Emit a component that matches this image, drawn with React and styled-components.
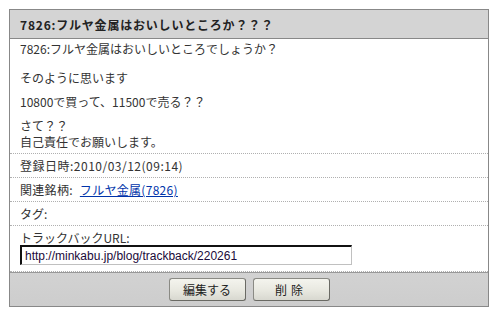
import React from "react";
import styled, { createGlobalStyle } from "styled-components";

const GlobalStyle = createGlobalStyle`
    html, body {
        margin: 0;
        padding: 0;
        background: #ffffff;
    }
    body {
        font-family: "Noto Sans CJK JP", "DejaVu Sans", sans-serif;
        font-size: 12px;
        color: #333333;
    }
`;

const Page = styled.div`
    padding: 9px 0 0 9px;
    width: 495px;
    box-sizing: border-box;
`;

const Box = styled.div`
    width: 480px;
    box-sizing: border-box;
    border: 1px solid #888888;
    background: #ffffff;
`;

const Header = styled.div`
    height: 29px;
    box-sizing: border-box;
    display: flex;
    align-items: center;
    padding: 0 10px;
    background: #d4d4d4;
    border-bottom: 1px solid #888888;
    font-weight: bold;
    font-size: 12px;
    letter-spacing: 0.8px;
    color: #222222;
`;

const Row = styled.div`
    padding: ${(p) => p.$pad || "4px 10px"};
    min-height: ${(p) => p.$h || "auto"};
    box-sizing: border-box;
    border-bottom: 1px dotted #b0b0b0;
    line-height: 15px;
    letter-spacing: ${(p) => p.$spread || "0"};
    &:last-child {
        border-bottom: none;
    }
`;

const Para = styled.p`
    margin: 0 0 ${(p) => p.$gap || "9px"} 0;
    line-height: ${(p) => p.$lh || "15px"};
    &:last-child {
        margin-bottom: 0;
    }
`;

const Label = styled.span`
    color: #333333;
`;

const StockLink = styled.a`
    color: #0033aa;
    text-decoration: underline;
    margin-left: 7px;
`;

const UrlInput = styled.input`
    display: block;
    width: 332px;
    height: 20px;
    box-sizing: border-box;
    padding: 1px 3px;
    border-style: solid;
    border-width: 2px 1px 1px 2px;
    border-color: #111111 #c0c0c0 #c0c0c0 #111111;
    font-family: "Liberation Sans", Arial, sans-serif;
    font-size: 12px;
    letter-spacing: 0;
    color: #1a0a3a;
    background: #ffffff;
    outline: none;
`;

const Footer = styled.div`
    height: 34px;
    display: flex;
    align-items: center;
    justify-content: center;
    gap: 7px;
    background: linear-gradient(#d2d2d2, #cdcdcd);
    border-top: 1px solid #999999;
    box-sizing: border-box;
`;

const Button = styled.button`
    width: 77px;
    height: 23px;
    border: 1px solid #8a8a84;
    border-right-color: #6a6a64;
    border-bottom-color: #6a6a64;
    border-radius: 3px;
    background: linear-gradient(#f4f4ee, #e8e8e0 55%, #d8d8d0);
    font-family: "Noto Sans CJK JP", sans-serif;
    font-size: 12px;
    color: #222222;
    letter-spacing: ${(p) => p.$spread || "0"};
    padding: 0;
    cursor: pointer;
`;

export default function App() {
    return (
        <Page>
            <GlobalStyle />
            <Box>
                <Header>7826:フルヤ金属はおいしいところか？？？</Header>
                <Row $pad="2px 10px 3px 10px" $h="115px">
                    <Para $gap="14px">7826:フルヤ金属はおいしいところでしょうか？</Para>
                    <Para $gap="9px">そのように思います</Para>
                    <Para $gap="9px">10800で買って、11500で売る？？</Para>
                    <Para $lh="16px">
                        さて？？
                        <br />
                        自己責任でお願いします。
                    </Para>
                </Row>
                <Row $h="24px" $spread="0.5px">
                    <Label>登録日時:2010/03/12(09:14)</Label>
                </Row>
                <Row $h="24px" $spread="0.3px">
                    <Label>関連銘柄:</Label>
                    <StockLink href="#">フルヤ金属(7826)</StockLink>
                </Row>
                <Row $h="24px">
                    <Label>タグ:</Label>
                </Row>
                <Row $h="46px" $pad="4px 10px 5px 10px">
                    <Label>トラックバックURL:</Label>
                    <UrlInput readOnly value="http://minkabu.jp/blog/trackback/220261" />
                </Row>
                <Footer>
                    <Button>編集する</Button>
                    <Button $spread="4px">削除</Button>
                </Footer>
            </Box>
        </Page>
    );
}
